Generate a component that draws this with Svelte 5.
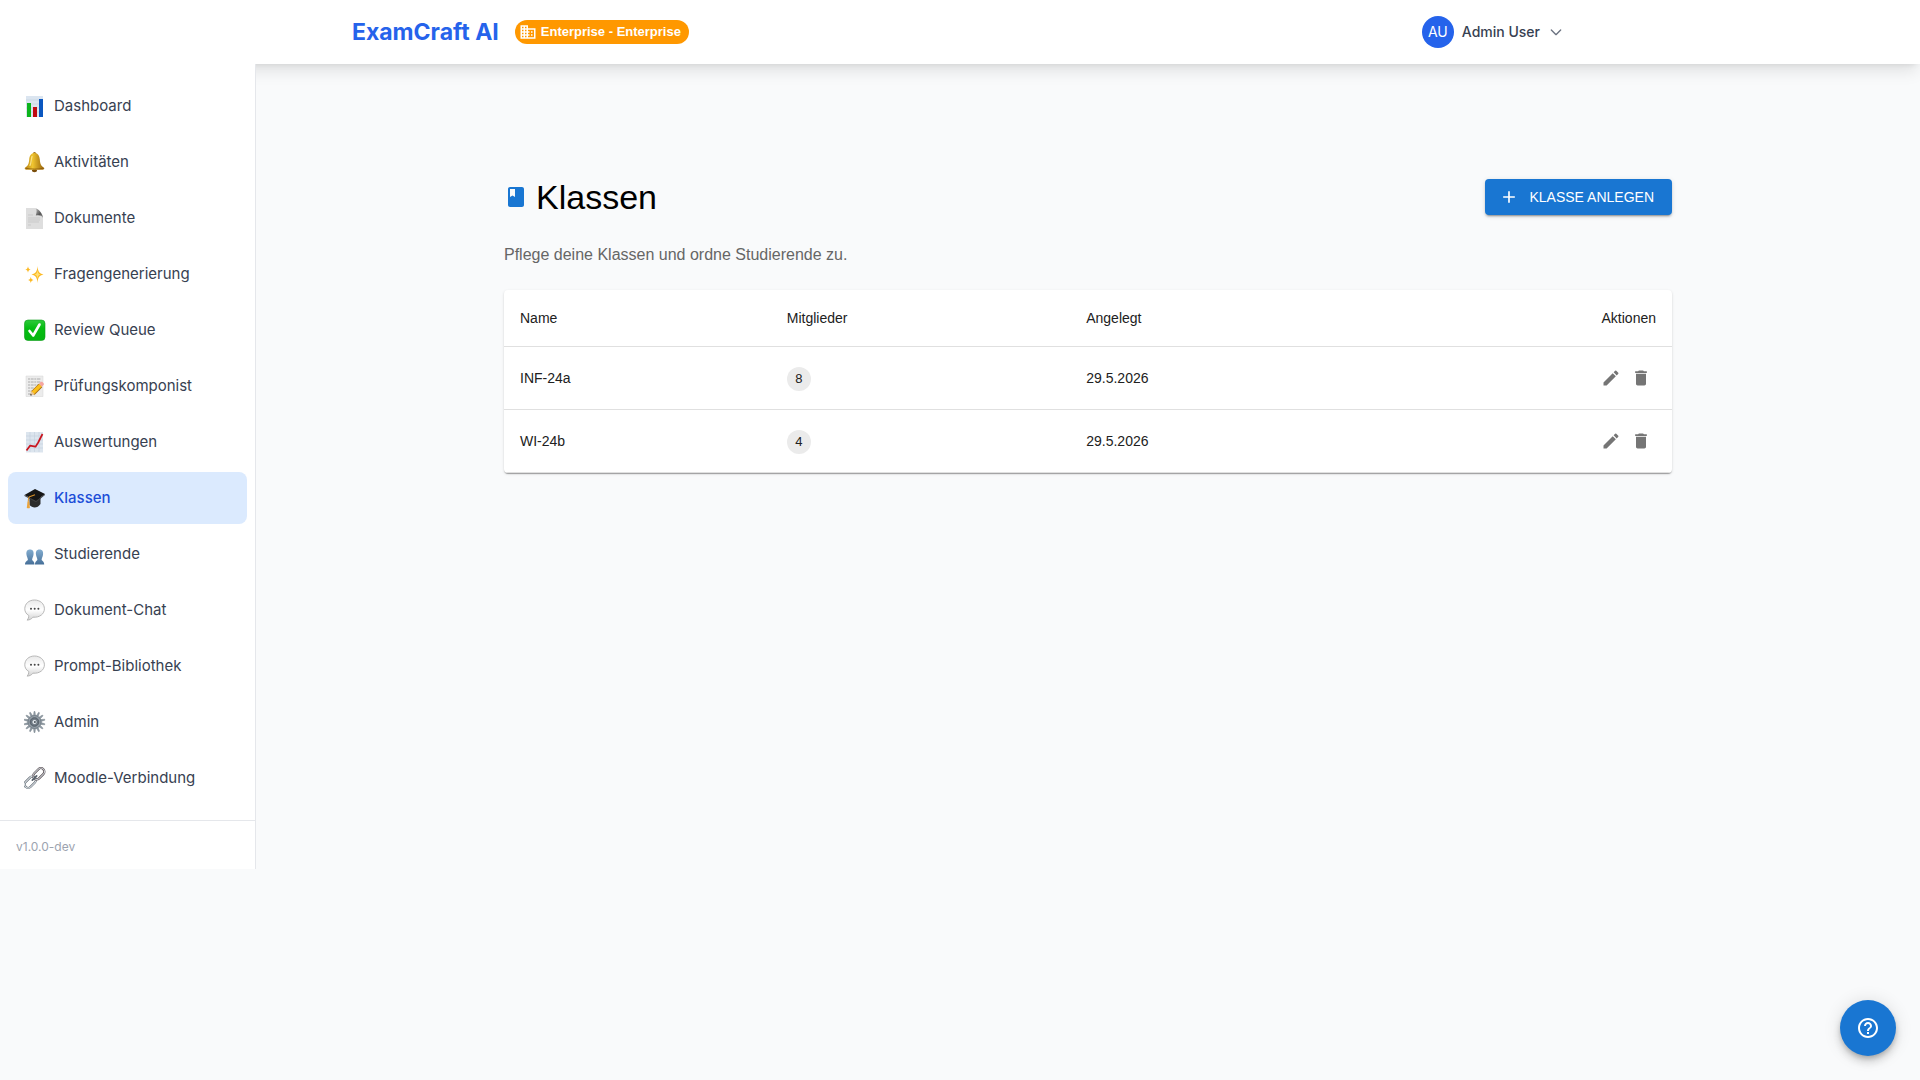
<script>
  const navItems = [
    { icon: 'chart', label: 'Dashboard' },
    { icon: 'bell', label: 'Aktivitäten' },
    { icon: 'page', label: 'Dokumente' },
    { icon: 'sparkles', label: 'Fragengenerierung' },
    { icon: 'check', label: 'Review Queue' },
    { icon: 'memo', label: 'Prüfungskomponist' },
    { icon: 'trend', label: 'Auswertungen' },
    { icon: 'cap', label: 'Klassen' },
    { icon: 'people', label: 'Studierende' },
    { icon: 'chat', label: 'Dokument-Chat' },
    { icon: 'chat', label: 'Prompt-Bibliothek' },
    { icon: 'gear', label: 'Admin' },
    { icon: 'link', label: 'Moodle-Verbindung' }
  ]

  const classes = [
    { name: 'INF-24a', members: 8, created: '29.5.2026' },
    { name: 'WI-24b', members: 4, created: '29.5.2026' }
  ]

  const teeth = Array.from({ length: 14 }, (_, i) => (i * 360) / 14)

  let active = $state('Klassen')

  function select(event, label) {
    event.preventDefault()
    active = label
  }
</script>

{#snippet emoji(name)}
  <svg class="emoji" viewBox="0 0 22 22" fill="none" aria-hidden="true">
    {#if name === 'chart'}
      <path fill="#dbe5f0" d="M2 1h17v21H2z" />
      <path stroke="#c3d0de" stroke-width=".6" d="M2 5h17M2 9h17M2 13h17M2 17h17" />
      <path fill="#0cb41c" d="M3 8h4v14H3z" />
      <path fill="#c00a12" d="M9 12h4v10H9z" />
      <path fill="#0b57c0" d="M15 4h4v18h-4z" />
    {:else if name === 'bell'}
      <circle cx="10.500" cy="2.500" r="1.600" fill="#9a6a10" />
      <ellipse cx="10.500" cy="19.500" rx="2.600" ry="1.700" fill="#7a4d0a" />
      <path fill="url(#gold)" d="M10.500 2C6.800 2 5.500 5 5.200 8.500c-.3 4.300-1.200 6.300-4.200 8.300-.8.800.2 2 1.500 2h16c1.300 0 2.300-1.200 1.500-2-3-2-3.900-4-4.200-8.300C15.500 5 14.200 2 10.500 2z" />
      <path stroke="#8b5a0b" stroke-width=".8" d="M2 17.300c5 1 12 1 17 0" />
      <path stroke="#f9e28a" stroke-width="1.200" stroke-linecap="round" d="M8 5.500c-1 3-.6 6-2 9" />
    {:else if name === 'page'}
      <path fill="#dedede" d="M2 1h9l8 8v13H2z" />
      <path fill="url(#curl)" d="M11 1c2.500 1.500 1.500 5 .8 7.500C14.500 8 18 8 19 11c0-4-4.500-9.500-8-10z" />
      <path stroke="#c2c2c2" stroke-width=".7" d="M4 8h5M4 11h12M4 13h12M4 15h11M4 18h3" />
    {:else if name === 'sparkles'}
      <path fill="#fcb923" d="M13.500 3c.5 5.500 1.500 7.500 6 8.500-4.500 1-5.500 3-6 8.500-.5-5.500-1.500-7.500-6-8.500 4.500-1 5.500-3 6-8.500zM4 3.200c.3 2 .9 2.900 2.700 3.300C4.900 7 4.300 7.800 4 9.800c-.3-2-.9-2.800-2.700-3.300C3.100 6.100 3.700 5.200 4 3.200zM6.800 13.700c.3 2 .9 2.800 2.700 3.200-1.800.4-2.400 1.200-2.700 3.200-.3-2-.9-2.800-2.700-3.200 1.800-.4 2.400-1.200 2.700-3.200z" />
      <path fill="#ffe07a" d="M13.500 7c.3 3 1 4 3 4.500-2 .5-2.700 1.500-3 4.500-.3-3-1-4-3-4.500 2-.5 2.700-1.500 3-4.500z" />
    {:else if name === 'check'}
      <rect x=".5" y="1" width="20.500" height="20.500" rx="3.500" fill="url(#green)" stroke="#0a9a18" stroke-width=".6" />
      <path stroke="#fff" stroke-width="2.600" stroke-linecap="round" stroke-linejoin="round" d="M5.500 12l3.700 4.500 6.300-11" />
    {:else if name === 'memo'}
      <path fill="#ececec" stroke="#d4d4d4" stroke-width=".5" d="M2 1h17v20.500H2z" />
      <path stroke="#a6a6a6" stroke-width=".9" stroke-dasharray="2 .7 3 .6" d="M4 4h13M4 7h13M4 10h10M4 13h6M4 16h4M4 19h3" />
      <path stroke="#a56a10" stroke-width="5" d="M8.500 18.500l8-8" />
      <path stroke="#fbbf1c" stroke-width="3.600" d="M8.500 18.200l8-8" />
      <path fill="#f5a5a0" d="M15 8.600l2-1.800c1-.8 3.600 1.800 2.800 2.800L18 11.700z" />
      <path fill="#e7c596" d="M7 15.700L6.300 20.200l4.700-.7z" />
      <path fill="#333" d="M6.500 18.600l-.2 1.900 1.900-.3z" />
    {:else if name === 'trend'}
      <path fill="#dce5ee" d="M2 1h17v20.500H2z" />
      <path stroke="#c3cfdc" stroke-width=".6" d="M2 5h17M2 9h17M2 13h17M2 17h17M6 1v20M10.500 1v20M15 1v20" />
      <path stroke="#c9151e" stroke-width="1.700" stroke-linejoin="round" d="M2.500 19.500l3.500-4.800 5.500 1 2.700-4.200L18.500 3" />
    {:else if name === 'cap'}
      <path fill="#2c2c2c" d="M5.500 10v8c3 3.500 8 3.500 11-1V9z" />
      <path fill="#161616" d="M.5 8L11 2l10 5-9 7z" />
      <path fill="#3f3f3f" d="M.5 8L12 14l9-7v1l-9 7.300L.5 9z" />
      <path stroke="#d8912a" stroke-width="1.100" d="M11 7.800L5.500 9.700c-1 .4-1.200 1.500-1.200 5" />
      <path fill="#eba43c" d="M3.500 14.500h1.800l.6 6.500c-1 .6-2.200.4-3.100-.1z" />
    {:else if name === 'people'}
      <path fill="url(#blue)" d="M6 6.500c-3 0-4 2.200-3.500 5.300.3 2.200 1.200 3.200 1.400 4.700C3.800 18 1 18 1 21.500h9.500c0-3.500-2.300-3.500-2.400-5 .2-1.500 1.100-2.500 1.400-4.700C10 8.700 9 6.500 6 6.500zM15.500 6.500c-3 0-4 2.200-3.500 5.300.3 2.200 1.200 3.200 1.400 4.700-.1 1.500-2.400 1.500-2.400 5h9.200c0-3.500-2.500-3.500-2.600-5 .2-1.500 1.100-2.500 1.400-4.700.5-3.100-.5-5.300-3.500-5.300z" />
    {:else if name === 'chat'}
      <path fill="url(#bubble)" stroke="#b0b0b0" stroke-width=".9" d="M10.500 1C4.800 1 .8 4.800.8 9.800c0 3 1.500 5.300 4 6.700.1 2-.7 3.500-1.800 4.600 2.500 0 4.700-1.100 5.900-2.900 6.900.6 11.500-3.400 11.500-8.400C20.400 4.800 16.200 1 10.500 1z" />
      <circle cx="7" cy="9.800" r="1" fill="#444" />
      <circle cx="10.700" cy="9.800" r="1" fill="#444" />
      <circle cx="14.400" cy="9.800" r="1" fill="#444" />
    {:else if name === 'gear'}
      {#each teeth as angle}
        <path fill="#939ea7" stroke="#66717b" stroke-width=".4" transform="rotate({angle} 10.500 11)" d="M9.500 4.500l.5-4h1l.5 4z" />
      {/each}
      <circle cx="10.500" cy="11" r="6.500" fill="#929da6" stroke="#66717b" stroke-width=".8" />
      <circle cx="10.500" cy="11" r="4.300" fill="#6c7782" stroke="#4c555e" stroke-width=".8" />
      <circle cx="10.500" cy="11" r="2.500" fill="#dfe5ea" stroke="#58626c" stroke-width=".6" />
      <circle cx="10.900" cy="11" r=".9" fill="#3c444c" />
    {:else if name === 'link'}
      <g transform="rotate(-45 10.500 11)">
        <rect x="-2" y="7.500" width="13" height="7" rx="3.500" stroke="#59636d" stroke-width="2.200" />
        <rect x="-2" y="7.500" width="13" height="7" rx="3.500" stroke="#d8dde1" stroke-width="1.100" />
        <rect x="10" y="7.500" width="13" height="7" rx="3.500" stroke="#4f4347" stroke-width="2.200" />
        <rect x="10" y="7.500" width="13" height="7" rx="3.500" stroke="#ccd1d6" stroke-width="1" />
        <path stroke="#59636d" stroke-width="1.800" stroke-linecap="round" d="M7.500 11h6" />
      </g>
    {/if}
  </svg>
{/snippet}

<!-- shared gradients for the nav icons -->
<svg class="defs" aria-hidden="true">
  <defs>
    <linearGradient id="gold" x1="0" x2="1">
      <stop offset="0" stop-color="#b07a10" />
      <stop offset=".4" stop-color="#f0c530" />
      <stop offset="1" stop-color="#96610a" />
    </linearGradient>
    <linearGradient id="curl" x1="0" x2="1" y2="1">
      <stop offset="0" stop-color="#c8c8c8" />
      <stop offset=".6" stop-color="#555" />
      <stop offset="1" stop-color="#999" />
    </linearGradient>
    <linearGradient id="green" x2="0" y2="1">
      <stop offset="0" stop-color="#2fca3c" />
      <stop offset=".4" stop-color="#05bd12" />
      <stop offset="1" stop-color="#05b510" />
    </linearGradient>
    <linearGradient id="blue" x2="0" y2="1">
      <stop offset="0" stop-color="#83add0" />
      <stop offset="1" stop-color="#466f98" />
    </linearGradient>
    <linearGradient id="bubble" x2="0" y2="1">
      <stop offset="0" stop-color="#e9e9e9" />
      <stop offset=".5" stop-color="#fff" />
      <stop offset="1" stop-color="#d2d2d2" />
    </linearGradient>
  </defs>
</svg>

<div class="app">
  <header class="topbar">
    <div class="topbar-inner">
      <div class="brand">
        <a class="logo" href="/">ExamCraft AI</a>
        <span class="plan">
          <svg width="18" height="18" viewBox="0 0 24 24" fill="currentColor" aria-hidden="true">
            <path d="M12 7V3H2v18h20V7H12zM6 19H4v-2h2v2zm0-4H4v-2h2v2zm0-4H4V9h2v2zm0-4H4V5h2v2zm4 12H8v-2h2v2zm0-4H8v-2h2v2zm0-4H8V9h2v2zm0-4H8V5h2v2zm10 12h-8v-2h2v-2h-2v-2h2v-2h-2V9h8v10zm-2-8h-2v2h2v-2zm0 4h-2v2h2v-2z" />
          </svg>
          Enterprise - Enterprise
        </span>
      </div>
      <button class="user" type="button">
        <span class="avatar">AU</span>
        <span>Admin User</span>
        <svg class="chevron" width="16" height="16" viewBox="0 0 24 24" fill="none" aria-hidden="true">
          <path d="M19 9l-7 7-7-7" stroke="currentColor" stroke-width="2" stroke-linecap="round" stroke-linejoin="round" />
        </svg>
      </button>
    </div>
  </header>

  <div class="layout">
    <aside class="sidebar">
      <nav>
        {#each navItems as item}
          <a
            href="/"
            class="nav-item"
            class:active={item.label === active}
            aria-current={item.label === active ? 'page' : undefined}
            onclick={(event) => select(event, item.label)}
          >
            {@render emoji(item.icon)}
            <span>{item.label}</span>
          </a>
        {/each}
      </nav>
      <div class="version">v1.0.0-dev</div>
    </aside>

    <main>
      <div class="content">
        <div class="title-row">
          <h1>
            <svg width="24" height="24" viewBox="0 0 24 24" fill="#1976d2" aria-hidden="true">
              <path d="M18 2H6c-1.100 0-2 .9-2 2v16c0 1.100.9 2 2 2h12c1.100 0 2-.9 2-2V4c0-1.100-.9-2-2-2zM6 4h5v8l-2.500-1.500L6 12V4z" />
            </svg>
            Klassen
          </h1>
          <button class="create" type="button">
            <svg width="20" height="20" viewBox="0 0 24 24" fill="currentColor" aria-hidden="true">
              <path d="M19 13h-6v6h-2v-6H5v-2h6V5h2v6h6v2z" />
            </svg>
            KLASSE ANLEGEN
          </button>
        </div>
        <p class="intro">Pflege deine Klassen und ordne Studierende zu.</p>

        <div class="card">
          <table>
            <thead>
              <tr>
                <th>Name</th>
                <th>Mitglieder</th>
                <th>Angelegt</th>
                <th class="right">Aktionen</th>
              </tr>
            </thead>
            <tbody>
              {#each classes as row}
                <tr>
                  <td>{row.name}</td>
                  <td><span class="count">{row.members}</span></td>
                  <td>{row.created}</td>
                  <td>
                    <div class="actions">
                      <button type="button" aria-label="{row.name} bearbeiten">
                        <svg width="20" height="20" viewBox="0 0 24 24" fill="currentColor">
                          <path d="M3 17.250V21h3.750L17.810 9.940l-3.750-3.750L3 17.250zM20.710 7.040c.39-.39.39-1.020 0-1.410l-2.340-2.340a.996.996 0 0 0-1.410 0l-1.830 1.830 3.750 3.750 1.830-1.830z" />
                        </svg>
                      </button>
                      <button type="button" aria-label="{row.name} löschen">
                        <svg width="20" height="20" viewBox="0 0 24 24" fill="currentColor">
                          <path d="M6 19c0 1.100.9 2 2 2h8c1.100 0 2-.9 2-2V7H6v12zM19 4h-3.500l-1-1h-5l-1 1H5v2h14V4z" />
                        </svg>
                      </button>
                    </div>
                  </td>
                </tr>
              {/each}
            </tbody>
          </table>
        </div>
      </div>
    </main>
  </div>

  <button class="help" type="button" aria-label="Hilfe">
    <svg width="24" height="24" viewBox="0 0 24 24" fill="currentColor" aria-hidden="true">
      <path d="M11 18h2v-2h-2v2zm1-16C6.480 2 2 6.480 2 12s4.480 10 10 10 10-4.480 10-10S17.520 2 12 2zm0 18c-4.410 0-8-3.590-8-8s3.590-8 8-8 8 3.590 8 8-3.590 8-8 8zm0-14c-2.210 0-4 1.790-4 4h2c0-1.100.9-2 2-2s2 .9 2 2c0 2-3 1.750-3 5h2c0-2.250 3-2.500 3-5 0-2.210-1.790-4-4-4z" />
    </svg>
  </button>
</div>

<style>
  :global(body) {
    margin: 0;
    background: #f9fafb;
  }

  .app {
    min-height: 100vh;
    background: #f9fafb;
    color: #374151;
    font-family: Inter, sans-serif;
    font-size: 16px;
    line-height: 24px;
  }

  .defs {
    position: absolute;
    width: 0;
    height: 0;
  }

  button {
    border: 0;
    padding: 0;
    background: none;
    color: inherit;
    font: inherit;
    cursor: pointer;
  }

  a {
    color: inherit;
    text-decoration: none;
  }

  svg {
    flex-shrink: 0;
  }

  .topbar {
    position: relative;
    background: #ffffff;
    box-shadow:
      0 10px 15px -3px rgba(0, 0, 0, 0.1),
      0 4px 6px -4px rgba(0, 0, 0, 0.1);
  }

  .topbar-inner {
    display: flex;
    align-items: center;
    justify-content: space-between;
    box-sizing: border-box;
    max-width: 1280px;
    height: 64px;
    margin: 0 auto;
    padding: 0 32px;
  }

  .brand {
    display: flex;
    align-items: center;
    gap: 16px;
  }

  .logo {
    color: #2563eb;
    font-size: 23px;
    font-weight: 700;
    line-height: 32px;
  }

  .plan {
    display: flex;
    align-items: center;
    gap: 4px;
    height: 24px;
    padding: 0 8px 0 4px;
    border-radius: 12px;
    background: #ff9800;
    color: #ffffff;
    font-family: 'Liberation Sans', Arial, sans-serif;
    font-size: 13px;
    font-weight: 700;
  }

  .user {
    display: flex;
    align-items: center;
    gap: 8px;
    padding: 4px;
    font-size: 14px;
    font-weight: 500;
  }

  .avatar {
    display: flex;
    align-items: center;
    justify-content: center;
    width: 32px;
    height: 32px;
    border-radius: 50%;
    background: #2563eb;
    color: #ffffff;
    font-weight: 400;
  }

  .chevron {
    color: #6b7280;
  }

  .layout {
    display: flex;
    align-items: flex-start;
  }

  .sidebar {
    position: relative;
    box-sizing: border-box;
    flex: 0 0 256px;
    border-right: 1px solid #e5e7eb;
    background: #ffffff;
  }

  nav {
    display: flex;
    flex-direction: column;
    gap: 4px;
    padding: 16px 8px;
  }

  .nav-item {
    display: flex;
    align-items: center;
    gap: 8px;
    padding: 14px 16px;
    border-radius: 8px;
    font-size: 15px;
  }

  .nav-item.active {
    background: #dbeafe;
    color: #1d4ed8;
    font-weight: 500;
  }

  .emoji {
    width: 22px;
    height: 22px;
  }

  .version {
    padding: 16px 16px 12px;
    border-top: 1px solid #e5e7eb;
    color: #9ca3af;
    font-size: 12px;
    line-height: 20px;
  }

  main {
    flex: 1;
    padding: 110px 24px 32px;
    font-family: 'Liberation Sans', Arial, sans-serif;
  }

  .content {
    max-width: 1168px;
    margin: 0 auto;
  }

  .title-row {
    display: flex;
    align-items: center;
    justify-content: space-between;
  }

  h1 {
    display: flex;
    align-items: center;
    gap: 8px;
    margin: 0;
    color: #000000;
    font-size: 34px;
    font-weight: 400;
    line-height: 46px;
  }

  .create {
    display: flex;
    align-items: center;
    gap: 10px;
    padding: 6px 18px 6px 14px;
    border-radius: 4px;
    background: #1976d2;
    color: #ffffff;
    font-size: 14px;
    box-shadow:
      0 3px 1px -2px rgba(0, 0, 0, 0.2),
      0 2px 2px rgba(0, 0, 0, 0.14),
      0 1px 5px rgba(0, 0, 0, 0.12);
  }

  .intro {
    margin: 23px 0;
    color: #666666;
  }

  .card {
    overflow: hidden;
    border-radius: 4px;
    background: #ffffff;
    box-shadow:
      0 2px 1px -1px rgba(0, 0, 0, 0.2),
      0 1px 1px rgba(0, 0, 0, 0.14),
      0 1px 3px rgba(0, 0, 0, 0.12);
  }

  table {
    width: 100%;
    border-collapse: collapse;
    color: #212121;
    font-size: 14px;
  }

  th,
  td {
    padding: 16px;
    border-bottom: 1px solid #e0e0e0;
    text-align: left;
    font-weight: 400;
  }

  .right {
    text-align: right;
  }

  .count {
    display: inline-flex;
    align-items: center;
    justify-content: center;
    box-sizing: border-box;
    min-width: 24px;
    height: 24px;
    padding: 0 8px;
    border-radius: 12px;
    background: #ebebeb;
    font-size: 13px;
    vertical-align: middle;
  }

  .actions {
    display: flex;
    justify-content: flex-end;
  }

  .actions button {
    display: flex;
    padding: 5px;
    color: #757575;
  }

  .help {
    position: fixed;
    right: 24px;
    bottom: 24px;
    display: flex;
    align-items: center;
    justify-content: center;
    width: 56px;
    height: 56px;
    border-radius: 50%;
    background: #1976d2;
    color: #ffffff;
    box-shadow:
      0 3px 5px -1px rgba(0, 0, 0, 0.2),
      0 6px 10px rgba(0, 0, 0, 0.14),
      0 1px 18px rgba(0, 0, 0, 0.12);
  }
</style>
